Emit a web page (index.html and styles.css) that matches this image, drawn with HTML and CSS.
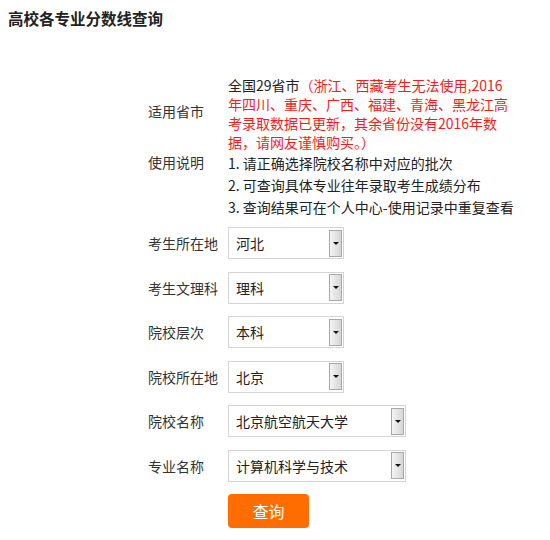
FILE: index.html
```html
<!DOCTYPE html>
<html lang="zh-CN">
<head>
  <meta charset="UTF-8">
  <title>高校各专业分数线查询</title>
  <link rel="stylesheet" href="styles.css">
</head>
<body>
  <h1 class="title">高校各专业分数线查询</h1>

  <div class="form">
    <div class="row row-middle">
      <div class="label label-raised">适用省市</div>
      <div class="info">全国29省市<span class="warn">（浙江、西藏考生无法使用,2016<br>年四川、重庆、广西、福建、青海、黑龙江高<br>考录取数据已更新，其余省份没有2016年数<br>据，请网友谨慎购买。）</span></div>
    </div>

    <div class="row row-top">
      <div class="label">使用说明</div>
      <ul class="notes">
        <li>1. 请正确选择院校名称中对应的批次</li>
        <li>2. 可查询具体专业往年录取考生成绩分布</li>
        <li>3. 查询结果可在个人中心-使用记录中重复查看</li>
      </ul>
    </div>

    <div class="row">
      <div class="label">考生所在地</div>
      <div class="select"><span class="value">河北</span><span class="arrow"></span></div>
    </div>

    <div class="row">
      <div class="label">考生文理科</div>
      <div class="select"><span class="value">理科</span><span class="arrow"></span></div>
    </div>

    <div class="row">
      <div class="label">院校层次</div>
      <div class="select"><span class="value">本科</span><span class="arrow"></span></div>
    </div>

    <div class="row">
      <div class="label">院校所在地</div>
      <div class="select"><span class="value">北京</span><span class="arrow"></span></div>
    </div>

    <div class="row">
      <div class="label">院校名称</div>
      <div class="select select-wide"><span class="value">北京航空航天大学</span><span class="arrow"></span></div>
    </div>

    <div class="row">
      <div class="label">专业名称</div>
      <div class="select select-wide"><span class="value">计算机科学与技术</span><span class="arrow"></span></div>
    </div>

    <div class="row">
      <div class="label"></div>
      <button class="btn">查询</button>
    </div>
  </div>
</body>
</html>
```

FILE: styles.css
```css
body {
  margin: 8px;
  font-family: "Noto Sans CJK SC", "Noto Sans", sans-serif;
  color: #333;
  background-color: #fff;
}

.title {
  margin: 0;
  font-size: 15.5px;
  line-height: 20px;
  font-weight: bold;
  color: #222;
}

.form {
  margin: 48px 0 0 140px;
}

.row {
  display: flex;
  align-items: center;
  margin-bottom: 12.5px;
}

.row-middle {
  margin-bottom: 0;
}

.row-top {
  align-items: flex-start;
  margin-bottom: 9px;
}

.label {
  width: 80px;
  flex-shrink: 0;
  font-size: 14px;
  line-height: 20px;
  color: #333;
}

.label-raised {
  padding-bottom: 7px;
}

.info {
  font-size: 14px;
  line-height: 19px;
  color: #222;
  white-space: nowrap;
}

.warn {
  color: #f51c1c;
}

.notes {
  margin: 0;
  padding: 0;
  list-style: none;
  font-size: 14px;
  line-height: 22px;
  color: #222;
  white-space: nowrap;
}

.select {
  display: flex;
  align-items: center;
  width: 106px;
  height: 30px;
  border: 1px solid #d4d4d4;
  background-color: #fff;
  padding: 0 1px 0 7px;
}

.select-wide {
  width: 168px;
}

.value {
  flex: 1;
  font-size: 14px;
  color: #222;
}

.arrow {
  position: relative;
  width: 11px;
  height: 25px;
  border: 1px solid #a8a8a8;
  background: linear-gradient(to right, #f4f4f4, #d6d6d6);
}

.arrow::after {
  content: "";
  position: absolute;
  left: 3px;
  top: 11px;
  border-left: 3px solid transparent;
  border-right: 3px solid transparent;
  border-top: 3px solid #111;
}

.btn {
  width: 81px;
  height: 34px;
  border: none;
  border-radius: 4px;
  background-color: #ff6c00;
  color: #fff;
  font-family: inherit;
  font-size: 16px;
  cursor: pointer;
}
```
